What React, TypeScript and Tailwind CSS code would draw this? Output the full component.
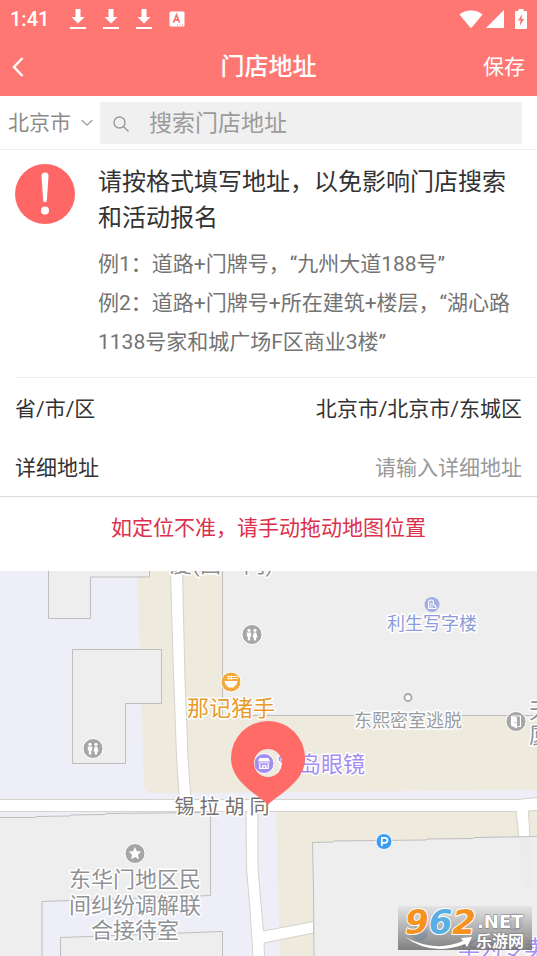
import React from "react";

function DownloadIcon() {
  return (
    <svg className="h-[22px] w-4" viewBox="0 0 16 22" fill="#fff" aria-hidden="true">
      <path d="M5.5 1h5v8h4L8 15.5 1.5 9h4z" />
      <rect x="0" y="19" width="16" height="2" />
    </svg>
  );
}

function StatusBar() {
  return (
    <div className="flex h-[37px] items-center justify-between px-[10px] text-white">
      <div className="flex items-center">
        <span className="w-[60px] text-[20px] leading-6 font-medium">1:41</span>
        <div className="flex items-center gap-[17px]">
          <DownloadIcon />
          <DownloadIcon />
          <DownloadIcon />
          <svg className="h-4 w-4" viewBox="0 0 16 16" aria-hidden="true">
            <rect x="0.5" y="0.5" width="15" height="15" rx="1.5" fill="#fff" />
            <path d="M4.5 11.5 L7.5 4 L10.500 11.5 M5.5 9 H9.500" stroke="#ff7773" strokeWidth="1.8" fill="none" />
            <path d="M8 14h1M10.500 14h1M13 14h1" stroke="#ff7773" strokeWidth="1.2" />
          </svg>
        </div>
      </div>
      <div className="flex items-center gap-[3px]">
        <svg className="h-[18px] w-6" viewBox="0 0 24 18" fill="#fff" aria-hidden="true">
          <path d="M0.5 4.5C3.5 2 7.5 0.500 12 0.500s8.500 1.500 11.500 4L12.800 17.600q-.8.8-1.600 0z" />
        </svg>
        <svg className="h-[18px] w-[18px]" viewBox="0 0 18 18" fill="#fff" aria-hidden="true">
          <path d="M18 0v18H0z" />
        </svg>
        <svg className="ml-2 h-5 w-3" viewBox="0 0 12 20" aria-hidden="true">
          <path d="M3.500 0h5v2H11q1 0 1 1v16q0 1-1 1H1q-1 0-1-1V3q0-1 1-1h2.500z" fill="#fff" />
          <path d="M7.300 5 3 11.500h2.500L4.700 17 9.200 10H6.700z" fill="#ff7773" />
        </svg>
      </div>
    </div>
  );
}

function TitleBar() {
  return (
    <div className="grid h-[59px] grid-cols-[1fr_auto_1fr] items-center px-3 text-white">
      <button type="button" aria-label="返回" className="justify-self-start">
        <svg className="h-5 w-3" viewBox="0 0 12 20" fill="none" stroke="#fff" strokeWidth="2.4" aria-hidden="true">
          <path d="M10.500 1 2 10l8.500 9" />
        </svg>
      </button>
      <h1 className="text-[24px] leading-8 font-medium">门店地址</h1>
      <button type="button" className="justify-self-end text-[21px] leading-8">保存</button>
    </div>
  );
}

function SearchRow() {
  return (
    <div className="flex items-center border-b border-[#ececec] pt-1.5 pb-[5px] pr-[15px] pl-2">
      <div className="relative mr-[7px]">
        <select
          aria-label="城市"
          defaultValue="北京市"
          className="block w-[85px] appearance-none bg-transparent text-[21px] leading-8 text-[#8c8c8c] outline-none"
        >
          <option>北京市</option>
          <option>上海市</option>
          <option>广州市</option>
        </select>
        <svg
          className="pointer-events-none absolute top-3 right-0 h-2 w-3"
          viewBox="0 0 12 8"
          fill="none"
          stroke="#a5a5a5"
          strokeWidth="1.5"
          aria-hidden="true"
        >
          <path d="M0.500 1 6 6l5.500-5" />
        </svg>
      </div>
      <label className="flex h-[42px] min-w-0 flex-1 items-center gap-5 bg-[#f0f0f0] pt-0.5 pl-[13px]">
        <svg className="h-4 w-4 shrink-0" viewBox="0 0 16 16" fill="none" stroke="#999" strokeWidth="1.4" aria-hidden="true">
          <circle cx="6.500" cy="6.500" r="5.500" />
          <path d="m10.500 10.500 5 5" />
        </svg>
        <input
          type="search"
          aria-label="搜索门店地址"
          placeholder="搜索门店地址"
          className="min-w-0 flex-1 bg-transparent text-[23px] leading-8 outline-none placeholder:text-[#9b9b9b]"
        />
      </label>
    </div>
  );
}

function Notice() {
  return (
    <section className="flex gap-[23px] pt-[14px] pr-4 pb-[15px] pl-[15px]">
      <svg className="h-[60px] w-[60px] shrink-0" viewBox="0 0 60 60" aria-hidden="true">
        <circle cx="30" cy="30" r="30" fill="#ff6767" />
        <path d="M26.500 12q0-3.500 3.500-3.500t3.500 3.500L31.800 37q-1.800 2.500-3.600 0z" fill="#fff" />
        <circle cx="30" cy="46.500" r="4" fill="#fff" />
      </svg>
      <div className="min-w-0 flex-1">
        <h2 className="text-[24px] leading-9 text-[#333]">请按格式填写地址，以免影响门店搜索和活动报名</h2>
        <div className="mt-[9px] text-[21px] leading-[39px] text-[#737373]">
          <p>例1：道路+门牌号，“九州大道188号”</p>
          <p>例2：道路+门牌号+所在建筑+楼层，“湖心路1138号家和城广场F区商业3楼”</p>
        </div>
      </div>
    </section>
  );
}

function AddressForm() {
  return (
    <form className="border-b border-[#dadada] text-[21px] text-[#333]">
      <div className="ml-[15px] border-t border-[#ececec] pr-[15px]">
        <div className="flex h-[59px] items-center justify-between pt-1">
          <label htmlFor="region">省/市/区</label>
          <button id="region" type="button">北京市/北京市/东城区</button>
        </div>
        <div className="flex h-[59px] items-center justify-between pt-1">
          <label htmlFor="detail">详细地址</label>
          <input
            id="detail"
            type="text"
            placeholder="请输入详细地址"
            className="min-w-0 flex-1 bg-transparent text-right outline-none placeholder:text-[#999]"
          />
        </div>
      </div>
    </form>
  );
}

function Restroom({ x, y }: { x: number; y: number }) {
  return (
    <g transform={`translate(${x} ${y})`}>
      <circle r="10" fill="#a6a6a6" stroke="#fff" strokeWidth="1" />
      <g fill="#fff">
        <circle cx="-3" cy="-4.200" r="1.600" />
        <path d="M-5.200-2h4.400v4h-1v4h-2.400v-4h-1z" />
        <circle cx="3" cy="-4.200" r="1.600" />
        <path d="M1.800-2h2.400L5.500 3H4.200v3H1.800V3H.5z" />
      </g>
    </g>
  );
}

function Shop({ x, y }: { x: number; y: number }) {
  return (
    <g transform={`translate(${x} ${y})`}>
      <circle r="10" fill="#a48df0" stroke="#fff" strokeWidth="1" />
      <path d="M-4.500-5.500H4.500L6-2H-6z" fill="#fff" />
      <path d="M-6-1Q-4.500.8-3-.6 -1.500.8 0-.6 1.500.8 3-.6 4.500.8 6-1z" fill="#fff" />
      <path d="M-4.200 0V4.800H4.200V0M-1.200 4.500V2.200H1.800V4.500" fill="none" stroke="#fff" strokeWidth="1.300" />
    </g>
  );
}

function StreetMap() {
  return (
    <svg
      className="block w-full select-none"
      viewBox="0 571 537 385"
      role="img"
      aria-label="地图"
    >
      <rect y="571" width="537" height="385" fill="#eeeef8" />

      {/* land blocks */}
      <path d="M137 571 L139 620 L141 690 L144 786 Q145 793 151 793 L330 792 L537 790 V571z" fill="#eeeade" />
      <path d="M276 811 L278 890 L280 956 H537 V811z" fill="#eeeade" />

      {/* buildings */}
      <g fill="#eeeeee" stroke="#bebebe" strokeWidth="1">
        <path d="M48.500 570V618.500H90.500V577H149.500V570" />
        <path d="M72.500 649.500H161.500V703.500H125.500V763.500H72.500z" />
        <path d="M222.500 570V715.500H538V570z" />
        <path d="M-1 817.500H35L36 816.500 70 816 71 815 105 814.500 106 813.500 210.500 812.500V895.500L42 901.500V957H-1z" />
        <path d="M60.500 957V937.500L222.500 931.500V957z" />
      </g>

      {/* roads */}
      <g fill="#fff" stroke="#d6d2cc" strokeWidth="1">
        <path d="M170.500 570 L173 660 L176.500 756 L179.500 800 H191 L188 756 L185 680 L182.500 570z" />
        <path d="M246 811 L246.500 868 L250 910 L253 957 H264.500 L264 943 L313.500 933 V921.500 L263.500 931 L261 904 L258 868 V811z" />
        <path d="M516 811 L519 838 H530 L528.500 811z" />
        <path d="M-1 799.500 H517 L538 797.500 V810.500 L516 811.500 H-1z" />
      </g>
      <path d="M180 799h10.500v4H180zM247 809h10.500v4H247zM517 809h11v4h-11z" fill="#fff" />
      <path d="M312.500 842.500 L333 842 L334 841 L426 840 L427 839 L473 838.500 L474 837.500 L538 836.500 V957 H314 L313.500 890z" fill="#eeeeee" stroke="#bebebe" />
      <path d="M519 838 L522 889 H532 L530 838z" fill="#ececec" />

      <Restroom x={252} y={634.5} />
      <Restroom x={93} y={748.5} />

      <g transform="translate(231 682)">
        <circle r="10" fill="#f2a83c" stroke="#fff" strokeWidth="1" />
        <path d="M-6.500-1H6.500Q6 3 3 4.500V5.500H-3V4.500Q-6 3-6.500-1z" fill="#fff" />
        <path d="M-4-5.500H7M-4-3.500H7M-2-6.500v4.500M0.500-6.500v4.500" stroke="#fff" strokeWidth=".8" />
      </g>

      <g transform="translate(432 604.5)">
        <circle r="7.500" fill="#a3afe2" />
        <path d="M-3.500 4V-2Q-3.500-4.500-1-4.500T1.500-2V0L4 2V4z" fill="none" stroke="#fff" strokeWidth="1.100" />
        <path d="M-1.800 3.500V-2M0 3.500V-2" stroke="#fff" strokeWidth=".8" />
      </g>

      <circle cx="408" cy="697.500" r="3.500" fill="#fff" stroke="#a6a6a6" strokeWidth="1.800" />

      <g transform="translate(516 721.5)">
        <circle r="10" fill="#a6a6a6" stroke="#fff" strokeWidth="1" />
        <path d="M-4.500-5.500H4.500V5H1.500M-4.500-5.500V4" stroke="#fff" strokeWidth="1.200" fill="none" />
        <path d="M-4.500-5.500 1-4V7L-4.500 4.500z" fill="#fff" />
        <circle cx="-.6" cy="1" r=".8" fill="#a6a6a6" />
      </g>

      <g transform="translate(135 853.5)">
        <circle r="10" fill="#a6a6a6" stroke="#fff" strokeWidth="1" />
        <path d="M0-6.500 1.900-2.300 6.300-1.900 3 1.200 3.900 5.700 0 3.400-3.900 5.700-3 1.200-6.300-1.900-1.900-2.300z" fill="#fff" />
      </g>

      <g transform="translate(384 841.500)">
        <circle r="8" fill="#3d9cf0" stroke="#fff" strokeWidth="1" />
        <path d="M-2.200 4.500V-3.700H.8Q3.500-3.700 3.500-1.200T.8 1.300H-2.200" fill="none" stroke="#fff" strokeWidth="1.700" />
      </g>

      <Shop x={264} y={763.5} />
      <Shop x={514} y={922} />
      <circle cx="420" cy="933" r="8" fill="#3d9cf0" />

      {/* place names */}
      <g stroke="#fff" strokeWidth="3" strokeLinejoin="round" paintOrder="stroke" fontSize="22">
        <text x="170" y="572" fill="#8c8c8c">厦(西一门)</text>
        <text x="231" y="716" textAnchor="middle" fill="#e89a2c">那记猪手</text>
        <text x="432" y="630" textAnchor="middle" fontSize="18" fill="#8c9bd9">利生写字楼</text>
        <text x="408" y="727" textAnchor="middle" fontSize="18" fill="#999c9f">东熙密室逃脱</text>
        <text x="529" y="718" fill="#8f9295">天</text>
        <text x="529" y="743" fill="#8f9295">厦</text>
        <text x="277" y="772" fill="#a48df0">宝岛眼镜</text>
        <text x="222" y="814" textAnchor="middle" fontSize="20" fill="#77706c">锡 拉 胡 同</text>
        <text textAnchor="middle" fill="#8f9295">
          <tspan x="135" y="887">东华门地区民</tspan>
          <tspan x="135" y="913">间纠纷调解联</tspan>
          <tspan x="135" y="938">合接待室</tspan>
        </text>
        <text x="458" y="956" fill="#a48df0">华为专卖店</text>
      </g>

      {/* draggable pin */}
      <path
        d="M268 805 C258 794 231 783 231 758 A37 37 0 0 1 305 758 C305 783 278 794 268 805z M268 749 A14 14 0 1 0 268 777 A14 14 0 1 0 268 749z"
        fill="#ff6b66"
        fillRule="evenodd"
      />

      {/* site badge */}
      <defs>
        <linearGradient id="badge" x1="0" y1="0" x2="0" y2="1">
          <stop offset="0" stopColor="#e2e2e2" />
          <stop offset="1" stopColor="#6e6e6e" />
        </linearGradient>
      </defs>
      <rect x="398" y="906" width="134" height="44" fill="url(#badge)" opacity=".86" />
      <path d="M405 937 Q435 953 463 941 L461 938 L472 937 L467 947 L465 944 Q432 957 405 937z" fill="#fff" />
      <g fontFamily="DejaVu Sans, sans-serif" fontWeight="700" paintOrder="stroke" strokeLinejoin="round">
        <text x="405" y="934" fontSize="34" fontStyle="italic" stroke="#fff" strokeWidth="2">
          <tspan fill="#f6921e">9</tspan>
          <tspan fill="#5aaee6">6</tspan>
          <tspan fill="#f6921e">2</tspan>
        </text>
        <text x="477" y="928" fontSize="18" fill="#fff" stroke="#777" strokeWidth="1">.NET</text>
      </g>
      <text x="476" y="947" fontSize="16" fontWeight="700" fill="#fff" stroke="#777" strokeWidth="1" paintOrder="stroke">乐游网</text>
    </svg>
  );
}

export default function App() {
  return (
    <div
      lang="zh-CN"
      className="flex min-h-screen flex-col bg-white font-['Roboto','Noto_Sans_CJK_SC',sans-serif]"
    >
      <header className="bg-[#ff7773]">
        <StatusBar />
        <TitleBar />
      </header>
      <SearchRow />
      <main className="flex flex-1 flex-col">
        <Notice />
        <AddressForm />
        <p className="pt-[15px] pb-[27px] text-center text-[21px] leading-8 text-[#dc2f4c]">如定位不准，请手动拖动地图位置</p>
        <div className="flex-1 bg-[#eeeef8]">
          <StreetMap />
        </div>
      </main>
    </div>
  );
}
